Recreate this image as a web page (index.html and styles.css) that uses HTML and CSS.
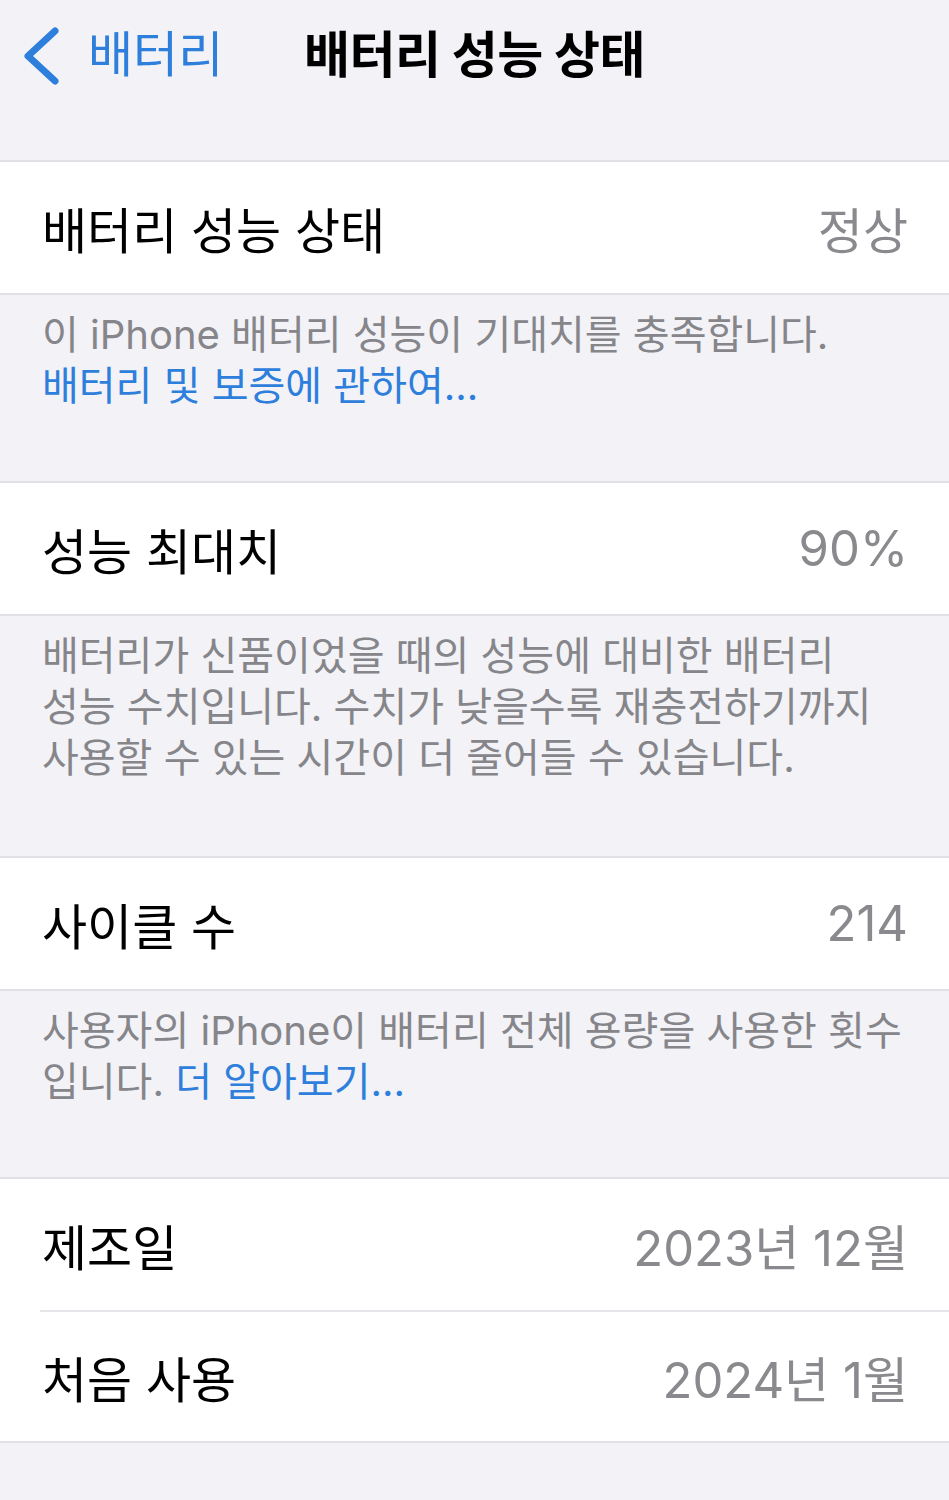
FILE: index.html
```html
<!DOCTYPE html>
<html lang="ko">
<head>
<meta charset="utf-8">
<title>배터리 성능 상태</title>
<link rel="stylesheet" href="styles.css">
</head>
<body>
<header class="nav">
  <a class="back" href="#">
    <svg class="chevron" width="40" height="64" viewBox="0 0 40 64" aria-hidden="true">
      <path d="M33 8 L6 33 L33 58" fill="none" stroke="currentColor" stroke-width="7" stroke-linecap="round" stroke-linejoin="round"/>
    </svg>
    <span>배터리</span>
  </a>
  <h1 class="title">배터리 성능 상태</h1>
</header>

<main>
  <section class="group">
    <div class="row"><span class="label">배터리 성능 상태</span><span class="value">정상</span></div>
  </section>
  <p class="footnote footnote-2">이 iPhone 배터리 성능이 기대치를 충족합니다.<br><a class="link" href="#">배터리 및 보증에 관하여...</a></p>

  <section class="group">
    <div class="row"><span class="label">성능 최대치</span><span class="value">90%</span></div>
  </section>
  <p class="footnote footnote-3">배터리가 신품이었을 때의 성능에 대비한 배터리<br>성능 수치입니다. 수치가 낮을수록 재충전하기까지<br>사용할 수 있는 시간이 더 줄어들 수 있습니다.</p>

  <section class="group">
    <div class="row"><span class="label">사이클 수</span><span class="value">214</span></div>
  </section>
  <p class="footnote footnote-2">사용자의 iPhone이 배터리 전체 용량을 사용한 횟수<br>입니다. <a class="link" href="#">더 알아보기...</a></p>

  <section class="group">
    <div class="row"><span class="label">제조일</span><span class="value">2023년 12월</span></div>
    <div class="row"><span class="label">처음 사용</span><span class="value">2024년 1월</span></div>
  </section>
</main>
</body>
</html>
```

FILE: styles.css
```css
* { box-sizing: border-box; }

html, body {
  margin: 0;
  padding: 0;
  background: #f2f2f7;
}

body {
  font-family: Inter, "Noto Sans CJK KR", sans-serif;
  color: #000;
  -webkit-font-smoothing: antialiased;
}

.nav {
  height: 160px;
  display: grid;
  grid-template-columns: 1fr auto 1fr;
  align-items: start;
  padding-top: 24px;
}

.back {
  display: flex;
  align-items: center;
  gap: 26px;
  padding-left: 22px;
  color: #2e7fdb;
  text-decoration: none;
  font-size: 49px;
  line-height: 62px;
  height: 62px;
}

.chevron { flex: none; }

.title {
  margin: 0;
  font-size: 50px;
  line-height: 62px;
  font-weight: 700;
  letter-spacing: -0.5px;
}

.group {
  background: #fff;
  border-top: 2px solid #e0e0e5;
  border-bottom: 2px solid #e0e0e5;
}

.row {
  height: 131px;
  display: flex;
  align-items: center;
  justify-content: space-between;
  padding: 0 41px 0 42px;
  font-size: 49px;
}

.row + .row {
  border-top: 2px solid #e6e6ea;
  margin-left: 40px;
  padding-left: 2px;
}

.label { color: #000; }
.value { color: #8a8a8e; }

.footnote {
  margin: 0;
  padding: 14px 41px 0 42px;
  font-size: 40px;
  line-height: 51px;
  color: #85858a;
  white-space: nowrap;
}

.footnote-2 { height: 186px; }
.footnote-3 { height: 240px; }

.link {
  color: #2e7fdb;
  text-decoration: none;
}
```
